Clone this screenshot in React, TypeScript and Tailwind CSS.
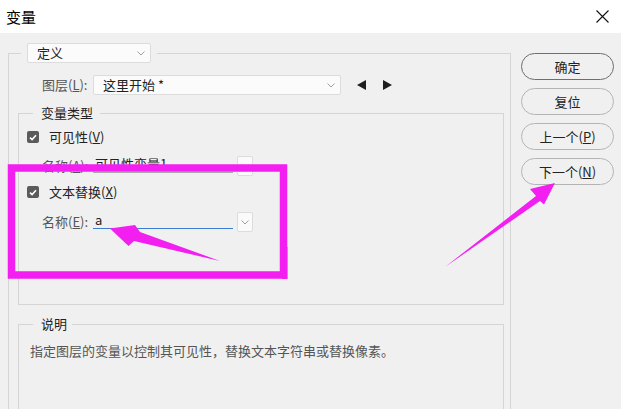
import React from "react";

function Chevron() {
  return (
    <svg width="8" height="5" viewBox="0 0 8 5" className="block">
      <path d="M0.5 0.5 L4 4 L7.5 0.5" fill="none" stroke="#a0a0a0" strokeWidth="1" />
    </svg>
  );
}

function CheckBox() {
  return (
    <div className="w-[12px] h-[12px] rounded-[2px] bg-[#5b5b5b] flex items-center justify-center">
      <svg width="8" height="7" viewBox="0 0 8 7">
        <path d="M1 3.6 L3.1 5.6 L7 1.2" fill="none" stroke="#ffffff" strokeWidth="1.6" />
      </svg>
    </div>
  );
}

function NameRow({ label, letter, value, active }: { label: string; letter: string; value: string; active?: boolean }) {
  return (
    <div className="flex items-start h-[20px] pl-[23px]">
      <div className="w-[51px] h-[20px] flex items-center text-[#555] whitespace-nowrap">
        {label}(<u>{letter}</u>):
      </div>
      <div
        className={
          "w-[140px] h-[17px] border-b pl-[2px] flex items-center text-[#222] " +
          (active ? "border-[#3b7fd4]" : "border-[#aaaaaa]")
        }
      >
        {value}
      </div>
      <div className="ml-[4px] w-[16px] h-[20px] border border-[#dcdcdc] bg-[#fafafa] rounded-[2px] flex items-center justify-center">
        <Chevron />
      </div>
    </div>
  );
}

function CheckRow({ label, letter }: { label: string; letter: string }) {
  return (
    <div className="flex items-center h-[20px] pl-[8px] gap-[10px] text-[#222]">
      <CheckBox />
      <span className="whitespace-nowrap">
        {label}(<u>{letter}</u>)
      </span>
    </div>
  );
}

const buttons = [
  { text: "确定", main: true },
  { text: "复位" },
  { text: "上一个", key: "P" },
  { text: "下一个", key: "N" },
];

export default function App() {
  return (
    <div className="relative w-[621px] h-[409px] overflow-hidden bg-[#f0f0f0] text-[13px] font-['Noto_Sans_CJK_SC','Noto_Sans',sans-serif]">
      {/* title bar */}
      <div className="h-[33px] bg-white flex items-center justify-between pl-[6px] pr-[12px]">
        <span className="text-[15px] text-black leading-none">变量</span>
        <svg width="13" height="13" viewBox="0 0 13 13">
          <path d="M0.5 0.5 L12.5 12.5 M12.5 0.5 L0.5 12.5" stroke="#111" strokeWidth="1.1" />
        </svg>
      </div>

      <div className="flex pl-[8px] pt-[10px] gap-[10px]">
        {/* outer group */}
        <fieldset className="w-[503px] h-[380px] border border-[#d5d5d5] shrink-0">
          <legend className="ml-[12px] px-[6px]">
            <div className="w-[124px] h-[20px] border border-[#dcdcdc] bg-[#fbfbfb] rounded-[2px] flex items-center justify-between pl-[9px] pr-[5px] text-[#222]">
              <span>定义</span>
              <Chevron />
            </div>
          </legend>

          <div className="mt-[12px] pl-[33px] flex items-center h-[20px]">
            <span className="w-[51px] text-[#555] whitespace-nowrap">
              图层(<u>L</u>):
            </span>
            <div className="w-[248px] h-[20px] border border-[#dcdcdc] bg-[#fbfbfb] rounded-[2px] flex items-center justify-between pl-[9px] pr-[5px] text-[#222]">
              <span>这里开始 *</span>
              <Chevron />
            </div>
            <svg width="9" height="10" viewBox="0 0 9 10" className="ml-[16px]">
              <polygon points="0,5 9,0 9,10" fill="#1e1e1e" />
            </svg>
            <svg width="9" height="10" viewBox="0 0 9 10" className="ml-[17px]">
              <polygon points="9,5 0,0 0,10" fill="#1e1e1e" />
            </svg>
          </div>

          {/* 变量类型 */}
          <fieldset className="mt-[9px] ml-[9px] mr-[6px] border border-[#d5d5d5] pb-[72px]">
            <legend className="ml-[14px] pl-[8px] pr-[7px] leading-[18px] text-[#222]">变量类型</legend>
            <div className="mt-[5px]">
              <CheckRow label="可见性" letter="V" />
            </div>
            <div className="mt-[9px]">
              <NameRow label="名称" letter="A" value="可见性变量1" />
            </div>
            <div className="mt-[6px]">
              <CheckRow label="文本替换" letter="X" />
            </div>
            <div className="mt-[10px]">
              <NameRow label="名称" letter="E" value="a" active />
            </div>
          </fieldset>

          {/* 说明 */}
          <fieldset className="mt-[10px] ml-[9px] mr-[6px] border border-[#d5d5d5] h-[120px]">
            <legend className="ml-[14px] pl-[8px] pr-[5px] leading-[18px] text-[#222]">说明</legend>
            <p className="mt-[9px] pl-[11px] leading-[18px] text-[#555]">
              指定图层的变量以控制其可见性，替换文本字符串或替换像素。
            </p>
          </fieldset>
        </fieldset>

        {/* buttons */}
        <div className="mt-[10px] flex flex-col gap-[8px] w-[93px]">
          {buttons.map((b) => (
            <button
              key={b.text}
              className={
                "h-[27px] w-[93px] rounded-full border bg-[#f0f0f0] text-[#222] flex items-center justify-center " +
                (b.main ? "border-[#6e6e6e]" : "border-[#b4b4b4]")
              }
            >
              {b.text}
              {b.key && (
                <>
                  (<u>{b.key}</u>)
                </>
              )}
            </button>
          ))}
        </div>
      </div>

      {/* annotations */}
      <svg className="absolute inset-0 pointer-events-none" width="621" height="409" viewBox="0 0 621 409">
        <rect x="11.5" y="168" width="272" height="107" fill="none" stroke="#f31ef0" strokeWidth="7.5" />
        <rect x="282" y="247" width="5.5" height="32" fill="#f31ef0" />
        <polygon
          points="110,228.5 135,225 140,232 220,261 134,241 128.5,246"
          fill="#f31ef0"
        />
        <polygon
          points="555,183 544,204.5 540,201 445,267 536,196 530,189"
          fill="#f31ef0"
        />
      </svg>
    </div>
  );
}
